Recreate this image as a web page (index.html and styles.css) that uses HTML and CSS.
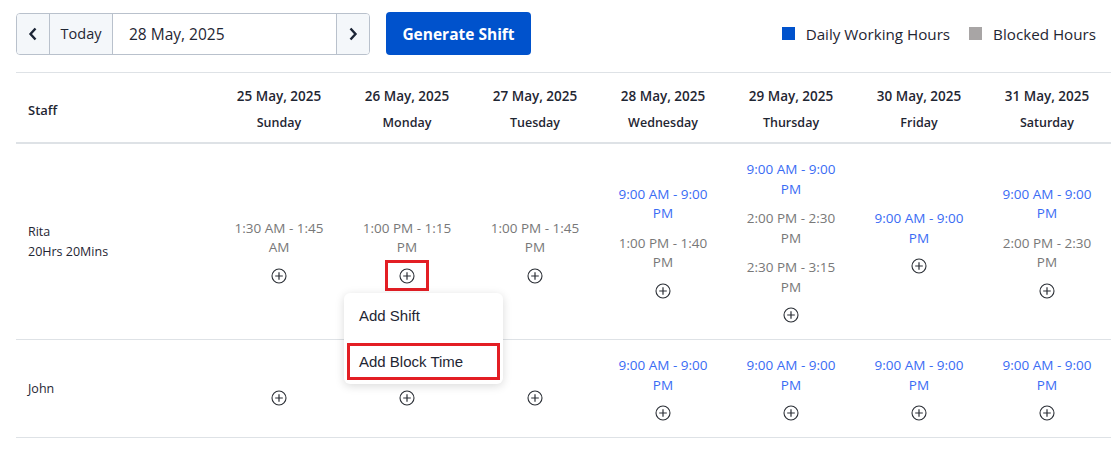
FILE: index.html
```html
<!DOCTYPE html>
<html lang="en">
<head>
    <meta charset="UTF-8">
    <meta name="viewport" content="width=device-width, initial-scale=1.0">
    <title>Shift Planner</title>
    <link rel="stylesheet" href="styles.css">
</head>
<body>
    <div class="page">
        <div class="toolbar">
            <div class="date-nav">
                <button class="nav-btn" aria-label="Previous week">
                    <svg width="10" height="14" viewBox="0 0 10 14"><path d="M7.5 1.5 L2.5 7 L7.5 12.5" fill="none" stroke="#1c2536" stroke-width="2.4"/></svg>
                </button>
                <button class="today-btn">Today</button>
                <div class="date-field">28 May, 2025</div>
                <button class="nav-btn" aria-label="Next week">
                    <svg width="10" height="14" viewBox="0 0 10 14"><path d="M2.5 1.5 L7.5 7 L2.5 12.5" fill="none" stroke="#1c2536" stroke-width="2.4"/></svg>
                </button>
            </div>
            <button class="generate-btn">Generate Shift</button>

            <div class="legend">
                <span class="legend-item"><i class="swatch working"></i>Daily Working Hours</span>
                <span class="legend-item"><i class="swatch blocked"></i>Blocked Hours</span>
            </div>
        </div>

        <table class="roster">
            <colgroup>
                <col class="staff-col">
                <col span="7" class="day-col">
            </colgroup>
            <thead>
                <tr>
                    <th class="staff-head">Staff</th>
                    <th><div class="day-date">25 May, 2025</div><div class="day-name">Sunday</div></th>
                    <th><div class="day-date">26 May, 2025</div><div class="day-name">Monday</div></th>
                    <th><div class="day-date">27 May, 2025</div><div class="day-name">Tuesday</div></th>
                    <th><div class="day-date">28 May, 2025</div><div class="day-name">Wednesday</div></th>
                    <th><div class="day-date">29 May, 2025</div><div class="day-name">Thursday</div></th>
                    <th><div class="day-date">30 May, 2025</div><div class="day-name">Friday</div></th>
                    <th><div class="day-date">31 May, 2025</div><div class="day-name">Saturday</div></th>
                </tr>
            </thead>
            <tbody>
                <tr>
                    <td class="staff-cell">Rita<br>20Hrs 20Mins</td>
                    <td>
                        <div class="slot-empty"></div>
                        <div class="slot blocked">1:30 AM - 1:45 AM</div>
                        <button class="add-btn"><svg width="16" height="16" viewBox="0 0 16 16"><circle cx="8" cy="8" r="7" fill="none" stroke="#2b2f36" stroke-width="1.1"/><path d="M8 4.2 V11.8 M4.2 8 H11.8" stroke="#2b2f36" stroke-width="1.2"/></svg></button>
                    </td>
                    <td>
                        <div class="slot-empty"></div>
                        <div class="slot blocked">1:00 PM - 1:15 PM</div>
                        <div class="add-wrap">
                            <button class="add-btn active"><svg width="16" height="16" viewBox="0 0 16 16"><circle cx="8" cy="8" r="7" fill="none" stroke="#2b2f36" stroke-width="1.1"/><path d="M8 4.2 V11.8 M4.2 8 H11.8" stroke="#2b2f36" stroke-width="1.2"/></svg></button>
                            <div class="add-menu">
                                <div class="menu-item">Add Shift</div>
                                <div class="menu-item selected">Add Block Time</div>
                            </div>
                        </div>
                    </td>
                    <td>
                        <div class="slot-empty"></div>
                        <div class="slot blocked">1:00 PM - 1:45 PM</div>
                        <button class="add-btn"><svg width="16" height="16" viewBox="0 0 16 16"><circle cx="8" cy="8" r="7" fill="none" stroke="#2b2f36" stroke-width="1.1"/><path d="M8 4.2 V11.8 M4.2 8 H11.8" stroke="#2b2f36" stroke-width="1.2"/></svg></button>
                    </td>
                    <td>
                        <div class="slot working">9:00 AM - 9:00 PM</div>
                        <div class="slot blocked">1:00 PM - 1:40 PM</div>
                        <button class="add-btn"><svg width="16" height="16" viewBox="0 0 16 16"><circle cx="8" cy="8" r="7" fill="none" stroke="#2b2f36" stroke-width="1.1"/><path d="M8 4.2 V11.8 M4.2 8 H11.8" stroke="#2b2f36" stroke-width="1.2"/></svg></button>
                    </td>
                    <td>
                        <div class="slot working">9:00 AM - 9:00 PM</div>
                        <div class="slot blocked">2:00 PM - 2:30 PM</div>
                        <div class="slot blocked">2:30 PM - 3:15 PM</div>
                        <button class="add-btn"><svg width="16" height="16" viewBox="0 0 16 16"><circle cx="8" cy="8" r="7" fill="none" stroke="#2b2f36" stroke-width="1.1"/><path d="M8 4.2 V11.8 M4.2 8 H11.8" stroke="#2b2f36" stroke-width="1.2"/></svg></button>
                    </td>
                    <td>
                        <div class="slot working">9:00 AM - 9:00 PM</div>
                        <button class="add-btn"><svg width="16" height="16" viewBox="0 0 16 16"><circle cx="8" cy="8" r="7" fill="none" stroke="#2b2f36" stroke-width="1.1"/><path d="M8 4.2 V11.8 M4.2 8 H11.8" stroke="#2b2f36" stroke-width="1.2"/></svg></button>
                    </td>
                    <td>
                        <div class="slot working">9:00 AM - 9:00 PM</div>
                        <div class="slot blocked">2:00 PM - 2:30 PM</div>
                        <button class="add-btn"><svg width="16" height="16" viewBox="0 0 16 16"><circle cx="8" cy="8" r="7" fill="none" stroke="#2b2f36" stroke-width="1.1"/><path d="M8 4.2 V11.8 M4.2 8 H11.8" stroke="#2b2f36" stroke-width="1.2"/></svg></button>
                    </td>
                </tr>
                <tr>
                    <td class="staff-cell">John</td>
                    <td>
                        <div class="slot-empty"></div>
                        <button class="add-btn"><svg width="16" height="16" viewBox="0 0 16 16"><circle cx="8" cy="8" r="7" fill="none" stroke="#2b2f36" stroke-width="1.1"/><path d="M8 4.2 V11.8 M4.2 8 H11.8" stroke="#2b2f36" stroke-width="1.2"/></svg></button>
                    </td>
                    <td>
                        <div class="slot-empty"></div>
                        <button class="add-btn"><svg width="16" height="16" viewBox="0 0 16 16"><circle cx="8" cy="8" r="7" fill="none" stroke="#2b2f36" stroke-width="1.1"/><path d="M8 4.2 V11.8 M4.2 8 H11.8" stroke="#2b2f36" stroke-width="1.2"/></svg></button>
                    </td>
                    <td>
                        <div class="slot-empty"></div>
                        <button class="add-btn"><svg width="16" height="16" viewBox="0 0 16 16"><circle cx="8" cy="8" r="7" fill="none" stroke="#2b2f36" stroke-width="1.1"/><path d="M8 4.2 V11.8 M4.2 8 H11.8" stroke="#2b2f36" stroke-width="1.2"/></svg></button>
                    </td>
                    <td>
                        <div class="slot working">9:00 AM - 9:00 PM</div>
                        <button class="add-btn"><svg width="16" height="16" viewBox="0 0 16 16"><circle cx="8" cy="8" r="7" fill="none" stroke="#2b2f36" stroke-width="1.1"/><path d="M8 4.2 V11.8 M4.2 8 H11.8" stroke="#2b2f36" stroke-width="1.2"/></svg></button>
                    </td>
                    <td>
                        <div class="slot working">9:00 AM - 9:00 PM</div>
                        <button class="add-btn"><svg width="16" height="16" viewBox="0 0 16 16"><circle cx="8" cy="8" r="7" fill="none" stroke="#2b2f36" stroke-width="1.1"/><path d="M8 4.2 V11.8 M4.2 8 H11.8" stroke="#2b2f36" stroke-width="1.2"/></svg></button>
                    </td>
                    <td>
                        <div class="slot working">9:00 AM - 9:00 PM</div>
                        <button class="add-btn"><svg width="16" height="16" viewBox="0 0 16 16"><circle cx="8" cy="8" r="7" fill="none" stroke="#2b2f36" stroke-width="1.1"/><path d="M8 4.2 V11.8 M4.2 8 H11.8" stroke="#2b2f36" stroke-width="1.2"/></svg></button>
                    </td>
                    <td>
                        <div class="slot working">9:00 AM - 9:00 PM</div>
                        <button class="add-btn"><svg width="16" height="16" viewBox="0 0 16 16"><circle cx="8" cy="8" r="7" fill="none" stroke="#2b2f36" stroke-width="1.1"/><path d="M8 4.2 V11.8 M4.2 8 H11.8" stroke="#2b2f36" stroke-width="1.2"/></svg></button>
                    </td>
                </tr>
            </tbody>
        </table>
    </div>
</body>
</html>
```

FILE: styles.css
```css
body {
    margin: 0;
    font-family: "Open Sans", "Noto Sans", sans-serif;
    color: #1f2633;
    background: #fff;
}

.page {
    padding: 12px 7px 0 16px;
}

/* toolbar */
.toolbar {
    display: flex;
    align-items: center;
    height: 43px;
    margin-bottom: 17px;
}

.date-nav {
    display: flex;
    height: 42px;
    border: 1px solid #b9c1cc;
    border-radius: 4px;
    overflow: hidden;
    box-sizing: border-box;
}

.date-nav button {
    border: none;
    background: #f4f7fa;
    font-family: inherit;
    cursor: pointer;
    padding: 0;
}

.nav-btn {
    width: 33px;
    display: flex;
    align-items: center;
    justify-content: center;
}

.nav-btn:first-child {
    border-right: 1px solid #b9c1cc !important;
}

.nav-btn:last-child {
    border-left: 1px solid #b9c1cc !important;
}

.today-btn {
    width: 63px;
    font-size: 14.5px;
    color: #1f2633;
    border-right: 1px solid #b9c1cc !important;
}

.date-field {
    width: 207px;
    padding-left: 16px;
    display: flex;
    align-items: center;
    font-size: 15.5px;
    background: #fff;
}

.generate-btn {
    margin-left: 16px;
    height: 43px;
    width: 145px;
    border: none;
    border-radius: 4px;
    background: #0052cc;
    color: #fff;
    font-family: inherit;
    font-size: 15.5px;
    font-weight: 700;
    cursor: pointer;
}

.legend {
    margin-left: auto;
    padding-right: 15px;
    display: flex;
    gap: 19px;
    font-size: 15.2px;
    color: #1f2633;
}

.legend-item {
    display: flex;
    align-items: center;
}

.swatch {
    width: 13px;
    height: 13px;
    margin-right: 11px;
}

.swatch.working { background: #0052cc; }
.swatch.blocked { background: #a8a5a5; }

/* roster table */
.roster {
    width: 1095px;
    border-collapse: collapse;
    table-layout: fixed;
}

.staff-col { width: 199px; }
.day-col { width: 128px; }

.roster th {
    border-top: 1px solid #dee2e6;
    border-bottom: 2px solid #dee2e6;
    padding: 13px 4px 9px;
    text-align: center;
    font-weight: 600;
    color: #1f2633;
}

.roster th.staff-head {
    text-align: left;
    padding-left: 12px;
    font-size: 13px;
}

.day-date {
    font-size: 13.5px;
    line-height: 20px;
}

.day-name {
    font-size: 12.5px;
    line-height: 20px;
    margin-top: 7px;
}

.roster td {
    padding: 16px 12px;
    border-bottom: 1px solid #dee2e6;
    text-align: center;
    vertical-align: middle;
}

.roster td.staff-cell {
    text-align: left;
    font-size: 12.5px;
    line-height: 20px;
}

.slot {
    font-size: 13.5px;
    line-height: 19.5px;
    margin-bottom: 10px;
    padding: 0 4px;
}

.slot.working { color: #3a6cf4; }
.slot.blocked { color: #787878; }

.slot-empty {
    height: 19.5px;
}

.add-btn {
    display: block;
    margin: 0 auto;
    width: 16px;
    height: 16px;
    padding: 0;
    border: none;
    background: none;
    cursor: pointer;
    position: relative;
}

.add-btn svg {
    display: block;
}

.add-btn.active::after {
    content: "";
    position: absolute;
    left: -14px;
    right: -14px;
    top: -8px;
    bottom: -7px;
    border: 3px solid #e31e24;
}

.add-wrap {
    position: relative;
    width: 16px;
    margin: 0 auto;
}

/* dropdown */
.add-menu {
    position: absolute;
    top: 25px;
    left: -55px;
    width: 159px;
    box-sizing: border-box;
    padding: 4px 3px;
    background: #fff;
    border-radius: 6px;
    box-shadow: 0 2px 10px rgba(0, 0, 0, 0.15);
    text-align: left;
    z-index: 5;
    font-family: "Liberation Sans", Arial, sans-serif;
    font-size: 15px;
    color: #1f2633;
}

.menu-item {
    height: 37px;
    line-height: 37px;
    padding-left: 12px;
    box-sizing: border-box;
}

.menu-item + .menu-item {
    margin-top: 9px;
}

.menu-item.selected {
    border: 3px solid #e31e24;
    line-height: 31px;
    padding-left: 9px;
}
```
